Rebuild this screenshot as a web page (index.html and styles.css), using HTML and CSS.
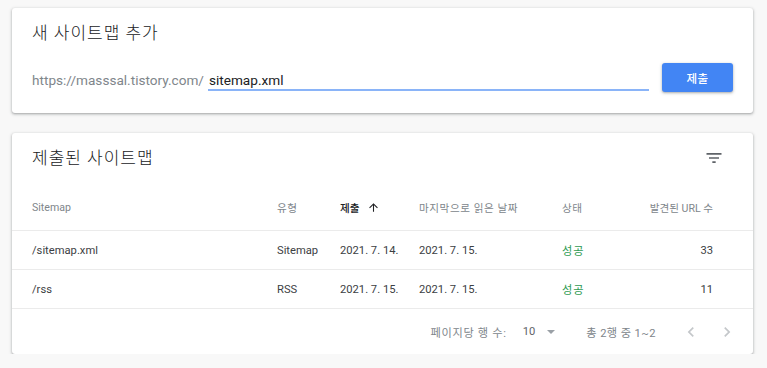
FILE: index.html
```html
<!DOCTYPE html>
<html lang="ko">
<head>
<meta charset="utf-8">
<link rel="stylesheet" href="styles.css">
</head>
<body>
<section class="card add-card">
  <h2 class="card-title">새 사이트맵 추가</h2>
  <div class="add-row">
    <span class="prefix">https://masssal.tistory.com/</span>
    <div class="input-wrap"><span class="input-text">sitemap.xml</span></div>
    <button class="submit-btn">제출</button>
  </div>
</section>

<section class="card list-card">
  <div class="list-head">
    <h2 class="card-title">제출된 사이트맵</h2>
    <svg class="filter-icon" viewBox="0 0 24 24" width="20" height="20"><path d="M10 18h4v-2h-4v2zM3 6v2h18V6H3zm3 7h12v-2H6v2z" fill="#5f6368"/></svg>
  </div>
  <div class="grid header-row">
    <span>Sitemap</span>
    <span class="ko">유형</span>
    <span class="sorted">제출 <svg class="sort-icon" viewBox="0 0 24 24" width="13" height="13"><path d="M4 12l1.41 1.41L11 7.83V20h2V7.83l5.58 5.59L20 12l-8-8-8 8z" fill="#202124"/></svg></span>
    <span class="ko">마지막으로 읽은 날짜</span>
    <span class="ko">상태</span>
    <span class="num">발견된 URL 수</span>
  </div>
  <div class="grid body-row">
    <span>/sitemap.xml</span>
    <span>Sitemap</span>
    <span>2021. 7. 14.</span>
    <span>2021. 7. 15.</span>
    <span class="ok">성공</span>
    <span class="num">33</span>
  </div>
  <div class="grid body-row">
    <span>/rss</span>
    <span>RSS</span>
    <span>2021. 7. 15.</span>
    <span>2021. 7. 15.</span>
    <span class="ok">성공</span>
    <span class="num">11</span>
  </div>
  <div class="footer">
    <span class="rows-label">페이지당 행 수:</span>
    <span class="rows-value">10</span>
    <span class="caret"></span>
    <span class="range">총 2행 중 1~2</span>
    <svg class="chev prev" viewBox="0 0 24 24" width="20" height="20"><path d="M15.41 7.41L14 6l-6 6 6 6 1.41-1.41L10.83 12z" fill="#c4c7ca"/></svg>
    <svg class="chev next" viewBox="0 0 24 24" width="20" height="20"><path d="M8.59 16.59L10 18l6-6-6-6-1.41 1.41L13.17 12z" fill="#c4c7ca"/></svg>
  </div>
</section>
</body>
</html>
```

FILE: styles.css
```css
* { box-sizing: border-box; }
html, body { margin: 0; }
body {
  background: #f8f8f8;
  padding: 8px 14px 0 12px;
  font-family: Roboto, "Noto Sans CJK KR", sans-serif;
  color: #3c4043;
}
.card {
  background: #fff;
  border-radius: 3px;
  box-shadow: 0 1px 2px rgba(60,64,67,.3), 0 1px 3px 1px rgba(60,64,67,.15);
}
.card-title {
  margin: 0;
  font-size: 17px;
  font-weight: 300;
  letter-spacing: 1px;
  line-height: 24px;
  color: #202124;
}
.add-card {
  height: 105px;
  padding: 13px 20px 0 20px;
}
.add-row {
  display: flex;
  align-items: flex-start;
  margin-top: 18px;
}
.prefix {
  padding-top: 7px;
  font-size: 13.6px;
  line-height: 20px;
  color: #80868b;
}
.input-wrap {
  flex: 1;
  margin-left: 4px;
  height: 28px;
  padding: 7px 0 0 1px;
  border-bottom: 2px solid #8ab4f8;
}
.input-text {
  display: block;
  font-size: 13.6px;
  line-height: 20px;
  color: #202124;
}
.submit-btn {
  margin-left: 13px;
  width: 71px;
  height: 29px;
  border: 0;
  border-radius: 3px;
  background: #4285f4;
  color: #fff;
  font-family: Roboto, "Noto Sans CJK KR", sans-serif;
  font-size: 11.5px;
  font-weight: 500;
  letter-spacing: 0.5px;
  box-shadow: 0 1px 2px rgba(60,64,67,.3), 0 1px 3px 1px rgba(60,64,67,.12);
  padding: 0;
}
.list-card {
  margin-top: 20px;
  height: 221px;
  padding-top: 12px;
}
.list-head {
  display: flex;
  align-items: center;
  justify-content: space-between;
  padding: 0 29px 0 20px;
  height: 26px;
}
.grid {
  display: grid;
  grid-template-columns: 245px 63px 79px 143px 70px 81px;
  align-items: center;
  padding: 0 40px 0 20px;
  border-bottom: 1px solid #ebebeb;
}
.header-row {
  margin-top: 13px;
  height: 47px;
  font-size: 10.6px;
  color: #80868b;
}
.header-row .ko { letter-spacing: 0.55px; }
.sorted {
  display: flex;
  align-items: center;
  gap: 7px;
  color: #202124;
  font-weight: 500;
}
.body-row {
  height: 39px;
  font-size: 11.2px;
  color: #3c4043;
}
.num { text-align: right; }
.ok { color: #2e9a52; letter-spacing: 1px; }
.footer {
  display: flex;
  align-items: center;
  justify-content: flex-end;
  height: 45px;
  padding-right: 16px;
  font-size: 11.2px;
  color: #80868b;
}
.rows-label { margin-right: 16px; letter-spacing: 0.7px; }
.rows-value { color: #5f6368; margin-right: 12px; }
.range { letter-spacing: 0.4px; }
.caret {
  width: 0; height: 0;
  border-left: 4.5px solid transparent;
  border-right: 4.5px solid transparent;
  border-top: 4.5px solid #9aa0a6;
  margin-right: 31px;
}
.chev.prev { margin-left: 25px; }
.chev.next { margin-left: 16px; }
```
